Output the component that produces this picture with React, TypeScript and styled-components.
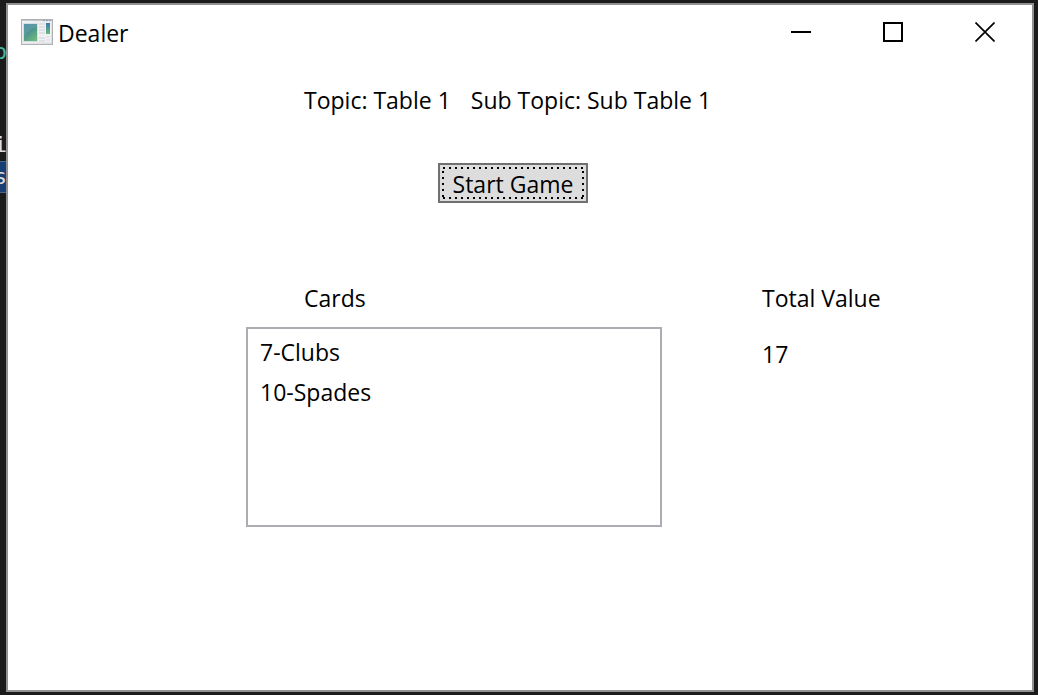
import React from "react";
import styled, { createGlobalStyle } from "styled-components";

const GlobalStyle = createGlobalStyle`
  * { box-sizing: border-box; }
  body {
    margin: 0;
    background: #1b1b1b;
    color: #000;
    font-family: "Segoe UI", "Open Sans", "Noto Sans", sans-serif;
    font-size: 23px;
    line-height: 32px;
  }
`;

const Desktop = styled.div`
  position: relative;
  display: flex;
  min-height: 100vh;
  padding: 3px 4px 3px 6px;
`;

const EditorGutter = styled.div`
  position: absolute;
  top: 0;
  left: 0;
  width: 7px;
  padding-top: 36px;
  overflow: hidden;
`;

const EditorLine = styled.div<{ $color: string; $gap?: number; $selected?: boolean }>`
  display: flex;
  justify-content: flex-end;
  height: 32px;
  margin-top: ${(p) => p.$gap ?? 0}px;
  color: ${(p) => p.$color};
  background: ${(p) => (p.$selected ? "#173f73" : "transparent")};
  border: solid ${(p) => (p.$selected ? "#4b6787" : "transparent")};
  border-width: 1px 0;
  font-family: "DejaVu Sans Mono", monospace;
  font-size: 22px;
  line-height: 30px;
`;

const Window = styled.main`
  position: relative;
  flex: 1;
  display: flex;
  flex-direction: column;
  background: #fff;
  border: 2px solid #919191;
`;

const TitleBar = styled.header`
  display: flex;
  align-items: center;
  height: 54px;
  padding: 0 1px 0 13px;
`;

const Title = styled.h1`
  flex: 1;
  margin: 0 0 0 5px;
  padding-top: 2px;
  font-size: 23px;
  font-weight: 400;
`;

const CaptionButton = styled.button`
  display: flex;
  align-items: center;
  justify-content: center;
  width: 92px;
  height: 54px;
  padding: 0;
  border: 0;
  background: transparent;
`;

const Topics = styled.div`
  display: flex;
  gap: 20px;
  padding: 25px 0 0 296px;
`;

const Text = styled.p`
  margin: 0;
  white-space: nowrap;
`;

const Actions = styled.div`
  padding: 47px 0 0 430px;
`;

const StartButton = styled.button`
  display: block;
  width: 150px;
  height: 40px;
  padding: 2px;
  border: 2px solid #707070;
  background: #ddd;
  color: #000;
  font: inherit;
`;

const FocusRing = styled.span`
  position: relative;
  display: block;
  height: 32px;
  line-height: 34px;

  svg {
    position: absolute;
    inset: 0;
    width: 100%;
    height: 100%;
  }
`;

const Hand = styled.div`
  display: flex;
  gap: 100px;
  padding: 79px 0 0 238px;
`;

const CardsColumn = styled.section`
  width: 416px;
`;

const Heading = styled.h2<{ $indent?: number }>`
  margin: 0;
  padding-left: ${(p) => p.$indent ?? 0}px;
  font-size: 23px;
  font-weight: 400;
`;

const CardList = styled.ul`
  height: 200px;
  margin: 13px 0 0;
  padding: 3px 12px;
  border: 2px solid #abadb3;
  list-style: none;
`;

const CardItem = styled.li`
  line-height: 40px;
`;

const Total = styled.section`
  display: flex;
  flex-direction: column;
  gap: 24px;
`;

const AppIcon = () => (
  <svg width="32" height="26" viewBox="0 0 32 26" aria-hidden="true">
    <defs>
      <linearGradient id="pane" x1="0" y1="0" x2="0.6" y2="1">
        <stop offset="0" stopColor="#4686a8" />
        <stop offset="0.5" stopColor="#4b9290" />
        <stop offset="1" stopColor="#6cb57c" />
      </linearGradient>
      <linearGradient id="bar" x1="0" y1="0" x2="0" y2="1">
        <stop offset="0" stopColor="#3d78ad" />
        <stop offset="1" stopColor="#69bb7c" />
      </linearGradient>
      <linearGradient id="frame" x1="0" y1="0" x2="1" y2="1">
        <stop offset="0" stopColor="#f6f6f8" />
        <stop offset="1" stopColor="#d9dade" />
      </linearGradient>
    </defs>
    <rect x="0.5" y="0.5" width="31" height="25" fill="url(#frame)" stroke="#afb1b5" />
    <path d="M1 1h30v1H1z" fill="#c2c7d0" />
    <path d="M22 1h2v1h-2zM25 1h2v1h-2zM28 1h2v1h-2z" fill="#9aa2af" />
    <path d="M2 3.5h28v20H2z" fill="#f0f1f3" />
    <rect x="2.5" y="4.5" width="14" height="18" fill="url(#pane)" stroke="#d5e0e4" />
    <path d="M3 5h13v3C10 9 6 13 3 18z" fill="#fff" opacity="0.1" />
    <path d="M18 5h6M18 8h6M18 11h6M18 14h6M18 19h6M18 22h6" stroke="#cfd1d5" />
    <rect x="25" y="4" width="4" height="11" fill="url(#bar)" />
    <path d="M25 18h4M25 21h4" stroke="#dcdde0" />
  </svg>
);

const cards = ["7-Clubs", "10-Spades"];

export default function App() {
  return (
    <>
      <GlobalStyle />
      <Desktop>
        <EditorGutter aria-hidden="true">
          <EditorLine $color="#3fb99f">p</EditorLine>
          <EditorLine $color="#dcdcdc" $gap={61}>i</EditorLine>
          <EditorLine $color="#dcdcdc" $selected>s</EditorLine>
        </EditorGutter>
        <Window>
          <TitleBar>
            <AppIcon />
            <Title>Dealer</Title>
            <CaptionButton type="button" aria-label="Minimize">
              <svg width="20" height="20" viewBox="0 0 20 20">
                <path d="M0 10h20" stroke="#000" strokeWidth="2" />
              </svg>
            </CaptionButton>
            <CaptionButton type="button" aria-label="Maximize">
              <svg width="20" height="20" viewBox="0 0 20 20">
                <rect x="1" y="1" width="18" height="18" fill="none" stroke="#000" strokeWidth="2" />
              </svg>
            </CaptionButton>
            <CaptionButton type="button" aria-label="Close">
              <svg width="20" height="20" viewBox="0 0 20 20">
                <path d="M0.5 0.5l19 19M19.5 0.5l-19 19" stroke="#000" strokeWidth="1.7" />
              </svg>
            </CaptionButton>
          </TitleBar>
          <Topics>
            <Text>Topic: Table 1</Text>
            <Text>Sub Topic: Sub Table 1</Text>
          </Topics>
          <Actions>
            <StartButton type="button">
              <FocusRing>
                <svg aria-hidden="true">
                  <path
                    d="M1 1H141M1 31H141M1 4V30M141 4V30"
                    fill="none"
                    stroke="#000"
                    strokeWidth="2"
                    strokeDasharray="2 4"
                  />
                </svg>
                Start Game
              </FocusRing>
            </StartButton>
          </Actions>
          <Hand>
            <CardsColumn>
              <Heading $indent={58}>Cards</Heading>
              <CardList>
                {cards.map((card) => (
                  <CardItem key={card}>{card}</CardItem>
                ))}
              </CardList>
            </CardsColumn>
            <Total>
              <Heading>Total Value</Heading>
              <Text>17</Text>
            </Total>
          </Hand>
        </Window>
      </Desktop>
    </>
  );
}
